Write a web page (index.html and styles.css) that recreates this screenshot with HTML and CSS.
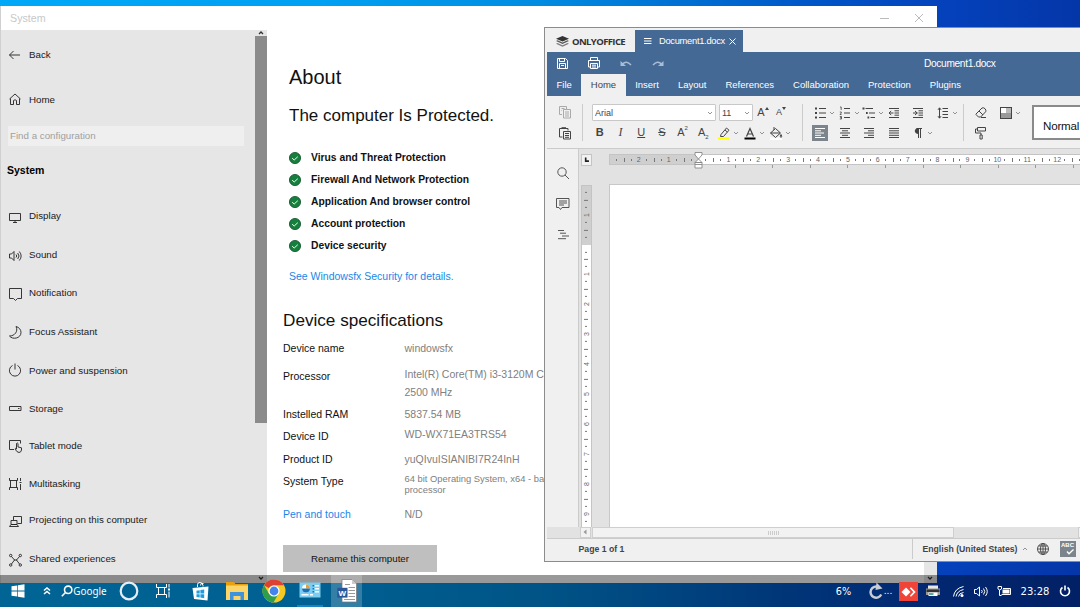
FILE: index.html
```html
<!DOCTYPE html>
<html lang="en">
<head>
    <meta charset="UTF-8">
    <meta name="viewport" content="width=device-width, initial-scale=1.0">
    <title>Desktop</title>
    <link rel="stylesheet" href="styles.css">
</head>
<body>
    <svg class="defs">
        <symbol id="chev" viewBox="0 0 8 8"><path d="M2 3l2 2 2-2"/></symbol>
    </svg>

    <!-- Settings window -->
    <div class="window settings">
        <div class="titlebar">
            <span>System</span>
            <svg width="56" height="12" viewBox="0 0 56 12"><path d="M6 6.500h9M41 2l8 8M49 2l-8 8"/></svg>
        </div>
        <div class="settings-body">
            <div class="sidebar">
                <div class="nav">
                    <a class="nav-item back"><svg viewBox="0 0 16 16"><path d="M2.500 8H13M6.500 4l-4 4 4 4"/></svg>Back</a>
                    <a class="nav-item home"><svg viewBox="0 0 16 16"><path d="M2.500 8l5.500-5 5.500 5M3.500 7.500v6h3V9.500q1.500-1.500 3 0v4h3v-6"/></svg>Home</a>
                    <input class="search" type="text" placeholder="Find a configuration">
                    <h3>System</h3>
                    <a class="nav-item"><svg class="low2" viewBox="0 0 16 16"><path d="M2.500 3.500h11v7h-11zM6 12.500h4M8 10.500v2"/></svg>Display</a>
                    <a class="nav-item"><svg class="low2" viewBox="0 0 16 16"><path d="M2.500 6h2l2.500-2.500v9L4.500 10h-2zM9 6.500q1.500 1.500 0 3M10.700 5q2.600 3 0 6M12.300 3.500q3.700 4.500 0 9"/></svg>Sound</a>
                    <a class="nav-item"><svg class="low1" viewBox="0 0 16 16"><path d="M2.500 2.500h12v10h-4l-2 2-2-2h-4z"/></svg>Notification</a>
                    <a class="nav-item"><svg class="low1" viewBox="0 0 16 16"><path d="M9 1.500c2.500 5-1.500 9.500-6.500 9.500 3 4 11.500 2.500 11.500-3.500 0-3-2-5.200-5-6z"/></svg>Focus Assistant</a>
                    <a class="nav-item"><svg viewBox="0 0 16 16"><path d="M5.500 3.500a5.600 5.600 0 1 0 5 0M8 1.500v6"/></svg>Power and suspension</a>
                    <a class="nav-item"><svg viewBox="0 0 16 16"><path d="M2.500 5.500h11.500v4H2.500zM11 7.500h1.500"/></svg>Storage</a>
                    <a class="nav-item tight"><svg class="low1" viewBox="0 0 16 16"><path d="M7 11.500H2.500v-9h11v3M9.500 11V5.500q1-1 1.500 0V9l3.500 .8V12q-.5 2.500-2.500 2.500-2 0-4-3.500 .5-1.500 1.500 0"/></svg>Tablet mode</a>
                    <a class="nav-item"><svg viewBox="0 0 16 16"><path d="M3.500 4.500v7M9.500 4.500v7M2.500 2v2.500h8V2M2.500 14v-2.500h8V14M13.500 2v3M13.500 8v6M12.500 6.500h2"/></svg>Multitasking</a>
                    <a class="nav-item tight"><svg class="low2" viewBox="0 0 16 16"><path d="M6.500 6V2.500h8v7h-4M4 6.500h6v4H4zM2.500 12.500h9l-1.500-2H4z"/></svg>Projecting on this computer</a>
                    <a class="nav-item"><svg class="low1" viewBox="0 0 16 16"><path d="M4.500 4.500l3 3.500M12.500 4.500L9.500 8M4.500 12l3-4M12.500 12l-3-4M7 8h3"/><circle cx="3.700" cy="3.500" r="1.200"/><circle cx="13.300" cy="3.500" r="1.200"/><circle cx="3.700" cy="13" r="1.200"/><circle cx="13.300" cy="13" r="1.200"/></svg>Shared experiences</a>
                </div>
                <div class="scrollbar">
                    <svg viewBox="0 0 12 6"><path d="M4 4l2-2 2 2"/></svg>
                    <div class="thumb"></div>
                    <svg class="down" viewBox="0 0 12 6"><path d="M4 1l2 2 2-2"/></svg>
                </div>
            </div>
            <div class="content">
                <h1>About</h1>
                <h2>The computer Is Protected.</h2>
                <ul class="checks">
                    <li><svg viewBox="0 0 12 12"><circle cx="6" cy="6" r="5.600"/><path d="M3.200 6.200l2 1.800 3.600-3.300"/></svg>Virus and Threat Protection</li>
                    <li><svg viewBox="0 0 12 12"><circle cx="6" cy="6" r="5.600"/><path d="M3.200 6.200l2 1.800 3.600-3.300"/></svg>Firewall And Network Protection</li>
                    <li><svg viewBox="0 0 12 12"><circle cx="6" cy="6" r="5.600"/><path d="M3.200 6.200l2 1.800 3.600-3.300"/></svg>Application And browser control</li>
                    <li><svg viewBox="0 0 12 12"><circle cx="6" cy="6" r="5.600"/><path d="M3.200 6.200l2 1.800 3.600-3.300"/></svg>Account protection</li>
                    <li><svg viewBox="0 0 12 12"><circle cx="6" cy="6" r="5.600"/><path d="M3.200 6.200l2 1.800 3.600-3.300"/></svg>Device security</li>
                </ul>
                <a class="link details">See Windowsfx Security for details.</a>
                <div class="specs-block">
                    <h2>Device specifications</h2>
                    <dl class="specs">
                        <dt>Device name</dt><dd>windowsfx</dd>
                        <dt class="cpu">Processor</dt><dd class="cpu">Intel(R) Core(TM) i3-3120M CPU<br>2500 MHz</dd>
                        <dt>Instelled RAM</dt><dd>5837.54 MB</dd>
                        <dt>Device ID</dt><dd class="raised">WD-WX71EA3TRS54</dd>
                        <dt>Product ID</dt><dd>yuQIvuISIANIBI7R24InH</dd>
                        <dt>System Type</dt><dd class="small">64 bit Operating System, x64 - based<br>processor</dd>
                        <dt><a class="link">Pen and touch</a></dt><dd>N/D</dd>
                    </dl>
                    <button type="button">Rename this computer</button>
                </div>
            </div>
            <div class="page-scroll"><svg viewBox="0 0 12 6"><path d="M4 1l2 2 2-2"/></svg></div>
        </div>
    </div>

    <div class="taskbar-shade"></div>

    <!-- Editor window -->
    <div class="window editor">
        <div class="app-tabs">
            <div class="brand">
                <svg width="13" height="11" viewBox="0 0 13 11"><path d="M6.500 0L13 2.700 6.500 5.600 0 2.700z"/><path opacity=".8" d="M1.500 4.300L0 5l6.500 3L13 5l-1.500-.7-5 2.300z"/><path opacity=".6" d="M1.500 7L0 7.700l6.500 3L13 7.700 11.500 7l-5 2.300z"/></svg>
                ONLYOFFICE
            </div>
            <div class="doc-tab">
                <svg width="8" height="8" viewBox="0 0 8 8"><path d="M0 1.500h7.500M0 4h7.500M0 6.500h7.500"/></svg>
                <span>Document1.docx</span>
                <svg width="7" height="7" viewBox="0 0 7 7"><path d="M.5.5l6 6M6.500.5l-6 6"/></svg>
            </div>
        </div>
        <div class="quickbar">
            <svg viewBox="0 0 14 14"><path d="M2.500 2.500h8l2 2v8h-10zM4.500 2.500v3h5v-3M4.500 12.500v-5h6v5M6 9.500h3"/></svg>
            <svg viewBox="0 0 14 14"><path d="M3.500 4.500v-3h7v3M3 11H1.500V4.500h11V11H11M3.500 7.500h7v5h-7zM5 9.200h4M5 11h4"/></svg>
            <svg class="arrow" viewBox="0 0 14 14"><path class="head" d="M1.500 5v5H7z"/><path d="M3.500 8q4-4 8.500 1"/></svg>
            <svg class="arrow" viewBox="0 0 14 14"><path class="head" d="M12.500 5v5H7z"/><path d="M10.500 8q-4-4-8.500 1"/></svg>
            <div class="doc-name">Document1.docx</div>
        </div>
        <div class="ribbon-tabs">
            <span>File</span><span class="active">Home</span><span>Insert</span><span>Layout</span><span>References</span><span>Collaboration</span><span>Protection</span><span>Plugins</span>
        </div>
        <div class="toolbar">
            <div class="group clipboard">
                <svg class="dim" viewBox="0 0 16 16"><path d="M5 10.500H2.500v-8h7V5M4.500 4.500h3M4.500 6.500H5M6.500 5.500h7V14h-7zM8 8h4M8 10h4M8 12h4"/></svg>
                <svg viewBox="0 0 16 16"><path d="M5.500 12h-3V3.500h8.500v2M6.500 6.500h7v7.500h-7zM8 8.500h4M8 10.500h4M8 12.300h4"/><path class="thick" d="M4.500 3h4.500"/></svg>
            </div>
            <div class="group font">
                <div class="row">
                    <div class="combo family">Arial<svg class="chev"><use href="#chev"/></svg></div>
                    <div class="combo size">11<svg class="chev"><use href="#chev"/></svg></div>
                    <span class="glyph grow">A<svg viewBox="0 0 4 4"><path d="M2 0l2 3H0z"/></svg></span>
                    <span class="glyph shrink">A<svg viewBox="0 0 4 4"><path d="M2 3l2-3H0z"/></svg></span>
                </div>
                <div class="row">
                    <span class="glyph"><b>B</b></span>
                    <span class="glyph"><i>I</i></span>
                    <span class="glyph"><u>U</u></span>
                    <span class="glyph"><s>S</s></span>
                    <span class="glyph">A<sup>2</sup></span>
                    <span class="glyph">A<sub>2</sub></span>
                    <span class="tool wide"><svg viewBox="0 0 16 16"><path d="M5 9.500L10.500 3l2.500 2.200-5.500 6.300H4.500zM9 5l2.300 2"/><rect class="yellow" x="2" y="12.500" width="11" height="2"/></svg><svg class="chev"><use href="#chev"/></svg></span>
                    <span class="tool wide"><svg viewBox="0 0 16 16"><path class="thin-a" d="M4.500 11.500L8 3.500l3.500 8M5.500 9h5"/><rect class="black" x="2.500" y="12.500" width="11" height="2"/></svg><svg class="chev"><use href="#chev"/></svg></span>
                    <span class="tool wide"><svg viewBox="0 0 16 16"><rect class="white" x="2" y="12.500" width="12" height="2.500"/><path d="M2.500 8L7.500 3.500l5 4.500-5 4.500zM6 5V2M2.500 8h9.500M13 9.500q1.500 2 0 3-1.500-1 0-3z"/></svg><svg class="chev"><use href="#chev"/></svg></span>
                </div>
            </div>
            <div class="group para">
                <div class="row">
                    <span class="tool"><svg viewBox="0 0 16 16"><path d="M7 3.500h7M7 8h7M7 12.500h7"/><path class="dot" d="M3 3.500h2M3 8h2M3 12.500h2"/></svg><svg class="chev"><use href="#chev"/></svg></span>
                    <span class="tool"><svg viewBox="0 0 16 16"><path d="M7 3.500h6M7 8h6M7 12.500h6"/><path class="digits" d="M3 2h1.200v3M2.800 7h1.500v1L3 9.500h1.500M2.800 11.500h1.700V14H2.800M3 12.700h1.500"/></svg><svg class="chev"><use href="#chev"/></svg></span>
                    <span class="tool"><svg viewBox="0 0 16 16"><path d="M4.500 3.500H12M8 8h6M9.500 12.500H14"/><path class="dot" d="M1.500 3.500h2M5 8h1.700M6.500 12.500h1.700"/></svg><svg class="chev"><use href="#chev"/></svg></span>
                    <span class="tool"><svg viewBox="0 0 16 16"><path d="M3 3.500h10M8.500 5.800H13M8.500 8H13M8.500 10.200H13M3 12.500h10M3 8h4.500M5.200 6L3 8l2.200 2"/></svg></span>
                    <span class="tool"><svg viewBox="0 0 16 16"><path d="M3 3.500h10M8.500 5.800H13M8.500 8H13M8.500 10.200H13M3 12.500h10M3 8h4.500M5 6l2.200 2L5 10"/></svg></span>
                    <span class="tool"><svg viewBox="0 0 16 16"><path d="M7.500 3.500H13M7.500 6.500H13M7.500 9.500H13M7.500 12.500H13M4.500 3v10M3 4.800l1.500-2L6 4.800M3 11.200l1.500 2 1.500-2"/></svg><svg class="chev"><use href="#chev"/></svg></span>
                </div>
                <div class="row">
                    <span class="tool"><svg class="pressed" viewBox="0 0 16 16"><path d="M3 3.500h10M3 5.800h6M3 8h9M3 10.300h6M3 12.500h10"/></svg></span>
                    <span class="tool"><svg viewBox="0 0 16 16"><path d="M3 3.500h10M5 5.800h6M3 8h10M5 10.300h6M3 12.500h10"/></svg></span>
                    <span class="tool"><svg viewBox="0 0 16 16"><path d="M3 3.500h10M7 5.800h6M3 8h10M7 10.300h6M3 12.500h10"/></svg></span>
                    <span class="tool"><svg viewBox="0 0 16 16"><path d="M3 3.500h10M3 5.800h10M3 8h10M3 10.300h10M3 12.500h10"/></svg></span>
                    <span class="tool"><svg viewBox="0 0 16 16"><path d="M8.500 13V3.500M10.500 13V3.500M6.500 3.500H12"/><path class="solid" d="M8.500 3C3.500 3 3.500 9 8.500 9z"/></svg><svg class="chev"><use href="#chev"/></svg></span>
                </div>
            </div>
            <div class="group misc">
                <div class="row">
                    <span class="tool"><svg viewBox="0 0 16 16"><path d="M3 9l6-6q1.500-.8 3 .7t.7 3l-5 5.300H5.500L3 9.500zM6 6l4 4M8 12.500h5"/></svg></span>
                    <span class="tool"><svg viewBox="0 0 16 16"><rect class="white" x="2.500" y="2.500" width="11" height="11"/><path class="shade1" d="M8 3h5v5H8z"/><path class="shade2" d="M3 8h5v5H3zM8 8h5v5H8z"/><rect x="2.500" y="2.500" width="11" height="11"/></svg><svg class="chev"><use href="#chev"/></svg></span>
                </div>
                <div class="row">
                    <span class="tool"><svg viewBox="0 0 16 16"><path d="M4.500 2.500h8V6h-8zM4.500 4h-2v4H8v2M7 10h2.200v4H7z"/></svg></span>
                </div>
            </div>
            <div class="style-box">Normal</div>
        </div>
        <div class="workspace">
            <div class="left-menu">
                <svg viewBox="0 0 16 16"><circle cx="7" cy="7" r="4.200"/><path d="M10 10l4 4"/></svg>
                <svg viewBox="0 0 16 16"><path d="M1.500 2.500h12.500v9H7l-1.500 2-1.500-2H1.500zM4 5h8M4 7h8M4 9h5"/></svg>
                <svg viewBox="0 0 16 16"><path d="M3 3.500h6M5 6.200h6M7 9h7M3 11.700h8"/></svg>
            </div>
            <div class="vruler-col">
                <div class="corner"><svg viewBox="0 0 11 11"><path d="M4.500 3v4.500h4"/></svg></div>
                <div class="vruler">
                    <div class="off"><span class="half"></span><span>1</span><span class="half ticked"></span></div>
                    <div class="on"><span class="half"></span><span>1</span><span>2</span><span>3</span><span>4</span><span>5</span><span>6</span><span>7</span><span>8</span><span>9</span></div>
                </div>
            </div>
            <div class="canvas">
                <div class="hruler">
                    <div class="off"><span class="half"></span><span>2</span><span>1</span><span class="half ticked"></span></div>
                    <div class="on"><span class="half"></span><span>1</span><span>2</span><span>3</span><span>4</span><span>5</span><span>6</span><span>7</span><span>8</span><span>9</span><span>10</span><span>11</span><span>12</span><span class="half ticked"></span></div>
                    <svg class="indent" viewBox="0 0 9 17"><path d="M1 .5h7v2.500L4.500 7 1 3zM1 10.500L4.500 7 8 10.500zM1 10.500h7v5.500H1zM1 12.500h7"/></svg>
                </div>
                <div class="tab-stops"></div>
                <div class="page"></div>
            </div>
        </div>
        <div class="hscroll">
            <div class="arrow-left"><svg viewBox="0 0 8 8"><path d="M5.500 1.500v5L2.500 4z"/></svg></div>
            <div class="hthumb"><i></i></div>
            <div class="arrow-right"></div>
        </div>
        <div class="statusbar">
            <span class="pages">Page 1 of 1</span>
            <div class="lang">
                <span>English (United States)</span>
                <svg class="chev up"><use href="#chev"/></svg>
                <svg class="globe" viewBox="0 0 14 14"><circle cx="7" cy="7" r="5.500"/><ellipse cx="7" cy="7" rx="2.500" ry="5.500"/><path d="M1.500 7h11M2.500 4h9M2.500 10h9M7 1.500v11"/></svg>
                <div class="spell">ABC<svg viewBox="0 0 8 6"><path d="M1 2.500l2 2.300L7.500.5"/></svg></div>
            </div>
        </div>
    </div>

    <!-- Taskbar -->
    <div class="taskbar">
        <div class="launchers">
            <div class="slot start"><svg width="14" height="14" viewBox="0 0 14 14"><path fill="#fff" d="M.5 2.300l5.800-.9v5.200H.5zM7 1.300L13.500.3v6.300H7zM.5 7.400h5.800v5.200l-5.800-.9zM7 7.400h6.500v6.300L7 12.700z"/></svg></div>
            <div class="slot chevrons"><svg width="8" height="8" viewBox="0 0 8 8"><path class="line" d="M1 3.500l3-2.500 3 2.500M1 7l3-2.500L7 7"/></svg></div>
            <div class="slot google"><svg width="12" height="12" viewBox="0 0 12 12"><circle class="line" cx="7.200" cy="4.800" r="3.700"/><path class="line" d="M4.500 7.500L.8 11.200"/></svg>Google</div>
            <div class="slot cortana"><svg width="20" height="20" viewBox="0 0 20 20"><circle class="ring" cx="10" cy="10" r="8.300"/></svg></div>
            <div class="slot tasks"><svg width="16" height="16" viewBox="0 0 16 16"><path class="line thin" d="M3.500 4.500v7M9.500 4.500v7M1.500 1v3.500h10V1M1.500 15v-3.500h10V15M14 1v3.500M14 8.500v6"/><path fill="#fff" d="M13 5.500h2v2h-2z"/></svg></div>
            <div class="slot store"><svg width="20" height="20" viewBox="0 0 20 20"><path class="line thin" d="M6.500 6V3.500q0-2 2.500-2t3 3v1M9.500 4.500q0-3 3-2"/><path fill="#fff" d="M1.500 7l16-1.500-1 14L3 18z"/><path fill="#1b9de0" d="M5.500 9.700l3.200-.5v3.300H5.500zM9.400 9.100l3.800-.5v3.900H9.400zM5.500 13.300h3.200v3.200l-3.200-.5zM9.400 13.300h3.800v3.900l-3.800-.6z"/></svg></div>
            <div class="slot files"><svg width="24" height="20" viewBox="0 0 24 20"><path fill="#e8a00c" d="M1 1h8l1.500 2H23v5H1z"/><path fill="#fbd46a" d="M1 4.500h22V19H1z"/><path fill="#3f92dc" d="M5 11h14v8h-3.500v-4h-7v4H5z"/></svg></div>
            <div class="slot browser"><svg width="24" height="24" viewBox="0 0 24 24"><circle cx="12" cy="12" r="11.500" fill="#f5c822"/><path fill="#dd4034" d="M2 6.200A11.500 11.500 0 0 1 22 6.300H12a5.700 5.700 0 0 0-5 3z"/><path fill="#2f9e4c" d="M2 6.200a11.500 11.500 0 0 0 9.500 17.300l5-8.700-9.500 0z"/><circle cx="12" cy="12" r="5.600" fill="#fff"/><circle cx="12" cy="12" r="4.400" fill="#4484ee"/></svg></div>
            <div class="slot running"><svg width="22" height="16" viewBox="0 0 22 16"><rect x=".5" y=".5" width="21" height="15" fill="#7bcdf2"/><circle cx="7" cy="6.500" r="4" fill="#fff"/><path fill="#e8a030" d="M7 6.500V2.500a4 4 0 0 1 4 4z"/><path fill="#1673b9" d="M7 6.500h4a4 4 0 0 1-8 0zM13.500 3h1.500v1.500h-1.500zM13.500 6h1.500v1.500h-1.500zM13.500 9h1.500v1.500h-1.500z"/><path fill="#fff" d="M16 3h4v1.500h-4zM16 6h4v1.500h-4zM16 9h4v1.500h-4zM2.500 12h7v1.500h-7zM11 12h3v1.500h-3z"/></svg></div>
            <div class="slot word"><svg width="20" height="24" viewBox="0 0 20 24"><path fill="#fff" stroke="#777" stroke-width=".7" d="M5 .5h10L19.500 5v18H5z"/><path fill="#ccc" d="M15 .5V5h4.500z"/><path stroke="#999" d="M8 5.500h5M11.500 8.500H18M11.500 11.500H18M11.500 14.500H18M11.500 17.500H18M7 20.500h11"/><path fill="#2a5699" d="M.3 8.800h10.200v9.800H.3z"/><text x="5.400" y="16.700">W</text></svg></div>
        </div>
        <div class="tray">
            <div class="slot load">6%</div>
            <div class="slot update"><svg width="16" height="18" viewBox="0 0 16 18"><path class="spin" d="M13.200 12.500A5.600 5.600 0 1 1 10.500 5"/><path fill="#c9cdd4" d="M8.500 .5l6 6-7 1.500z"/></svg><span>...</span></div>
            <div class="slot remote"><svg width="15" height="10" viewBox="0 0 15 10"><path fill="#fff" d="M5 .5L9.500 5 5 9.500.5 5z"/><path fill="#fff" d="M8.800 1.300L10 .2 14.700 5 10 9.800 8.800 8.700 12.300 5z"/></svg></div>
            <div class="slot printer"><svg width="16" height="14" viewBox="0 0 16 14"><path fill="#e8e8e8" d="M3 1.500h10V5H3z"/><path fill="#999" d="M1 4.500h14V11H1z"/><path fill="#333" d="M1.500 5.500h13v2.500h-13z"/><path fill="#fff" d="M3.500 8.500h9V12h-9z"/><path fill="#4bb2a5" d="M4 9h4.500v2H4z"/></svg></div>
            <div class="slot wifi"><svg width="13" height="13" viewBox="0 0 13 13"><path class="line thin" d="M1.500 11.500Q2.500 3.500 11.500 1.500M4 11.500q1-5.500 7.500-7M6.500 11.500q.5-3.500 5-4"/><circle cx="10" cy="10.500" r="1.500" fill="#fff"/></svg></div>
            <div class="slot volume"><svg width="15" height="13" viewBox="0 0 15 13"><path class="line thin" d="M1.500 4.500h2L6.500 2v9L3.500 8.500h-2zM8.500 5q1.500 1.500 0 3M10.500 3.500q2.500 3 0 6M12.500 2q3.500 4.500 0 9"/></svg></div>
            <div class="slot battery"><svg width="15" height="12" viewBox="0 0 15 12"><path class="line thin" d="M6 3.500h7.500v6H4.500M2.500 5v5.500h2M1 1.500h3.500V4q-1.700 2-3.500 0z"/><path fill="#fff" d="M5.500 4.500h7v4h-7z"/></svg></div>
            <div class="slot clock">23:28</div>
            <div class="slot power"><svg width="12" height="12" viewBox="0 0 12 12"><path class="line" d="M3.500 2.500a4.500 4.500 0 1 0 5 0M6 .5v5"/></svg></div>
        </div>
    </div>
</body>
</html>
```
FILE: styles.css
```css
* {
    box-sizing: border-box;
}
body {
    margin: 0;
    width: 1080px;
    height: 607px;
    position: relative;
    overflow: hidden;
    font-family: "Liberation Sans", Arial, sans-serif;
    background: linear-gradient(90deg, #00a8f8 0%, #00a0f2 30%, #008ce0 50%, #0058c8 74%, #0442bc 87%, #0436a8 100%);
}
h1, h2, h3, ul, dl, dd {
    margin: 0;
    padding: 0;
    font-weight: normal;
}
svg {
    display: block;
    flex: none;
    fill: none;
    stroke-width: 1;
}
.defs {
    position: absolute;
    width: 0;
    height: 0;
}
.window {
    position: absolute;
    display: flex;
    flex-direction: column;
    overflow: hidden;
}

/* Settings */
.settings {
    left: 0;
    top: 6px;
    width: 937px;
    height: 577px;
    background: #fff;
    border-left: 1px solid #d0d0d0;
}
.titlebar {
    height: 24px;
    display: flex;
    align-items: center;
    justify-content: space-between;
    padding: 0 7px 0 9px;
    font-size: 10.7px;
    color: #c8c8c8;
}
.titlebar svg {
    stroke: #aaa;
    stroke-width: .8;
}
.settings-body {
    flex: 1;
    display: flex;
    min-height: 0;
}
.sidebar {
    width: 266px;
    display: flex;
    background: #e6e6e6;
}
.nav {
    flex: 1;
    margin-top: -.3px;
}
.nav-item {
    display: flex;
    align-items: center;
    gap: 6px;
    height: 38.6px;
    padding-left: 6px;
    font-size: 9.75px;
    color: #1a1a1a;
}
.nav-item svg {
    width: 16px;
    height: 16px;
    stroke: #222;
    stroke-width: .9;
}
.nav-item .low1 {
    margin-top: 2px;
}
.nav-item .low2 {
    margin-top: 4px;
}
.nav-item.tight {
    margin-top: -2.3px;
}
.nav-item.back {
    height: 50px;
}
.nav-item.home {
    height: 39px;
}
.search {
    display: block;
    width: 236px;
    height: 20px;
    margin: 7px 0 0 7px;
    padding: 0 2px;
    border: none;
    background: #efefef;
    font: 9.75px "Liberation Sans", Arial, sans-serif;
}
.search::placeholder {
    color: #a0a0a0;
}
.nav h3 {
    margin: 14px 0 16.8px 6px;
    font-size: 10.5px;
    line-height: 20px;
    font-weight: bold;
    color: #000;
}
.scrollbar {
    width: 12px;
    display: flex;
    flex-direction: column;
}
.scrollbar svg,
.page-scroll svg {
    width: 12px;
    height: 6px;
    stroke: #333;
    stroke-width: 1.3;
}
.thumb {
    height: 387px;
    background: #8b8b8b;
}
.scrollbar .down {
    margin-top: auto;
    margin-bottom: 1px;
}
.content {
    flex: 1;
    padding: 35px 0 0 22px;
    color: #111;
    white-space: nowrap;
}
h1 {
    font-size: 20px;
    line-height: 24px;
}
h2 {
    font-size: 17px;
    line-height: 22px;
    margin-top: 16.2px;
}
.checks {
    list-style: none;
    margin-top: 19.3px;
}
.checks li {
    display: flex;
    align-items: center;
    gap: 10px;
    height: 22.1px;
    font-size: 10.3px;
    font-weight: bold;
}
.checks svg {
    width: 12px;
    height: 12px;
}
.checks circle {
    fill: #15803d;
    stroke: #0c4f27;
    stroke-width: .8;
}
.checks path {
    stroke: #e8fff0;
}
.link {
    color: #1a86e8;
}
.details {
    display: block;
    margin-top: 11px;
    font-size: 10.5px;
    line-height: 16px;
}
.specs-block {
    margin-left: -6px;
}
.specs-block h2 {
    margin-top: 25.5px;
    font-size: 17.15px;
}
.specs {
    display: grid;
    grid-template-columns: 121.5px 1fr;
    grid-template-rows: 22px 44px 22px 22.5px 22px 33.5px 22px;
    margin-top: 6px;
    font-size: 10.5px;
    line-height: 22px;
}
.specs dd {
    color: #808080;
}
.specs dt.cpu {
    padding-top: 6px;
}
.specs dd.cpu {
    padding-top: 6px;
    line-height: 18px;
}
.specs .raised {
    line-height: 19.5px;
}
.specs .small {
    padding-top: 3px;
    font-size: 9.4px;
    line-height: 11px;
}
.specs-block button {
    display: block;
    width: 154px;
    height: 27px;
    margin-top: 19.5px;
    border: none;
    background: #bfbfbf;
    font: 9.75px "Liberation Sans", Arial, sans-serif;
    color: #111;
}
.page-scroll {
    width: 13px;
    display: flex;
    align-items: flex-end;
    padding-bottom: 1px;
    background: linear-gradient(#fff 94%, #e6e6e6 94%);
}

/* Editor */
.editor {
    left: 544px;
    top: 27px;
    width: 560px;
    height: 535px;
    padding-left: 2px;
    border: 1px solid #8c8c8c;
    background: #f0f0f0;
}
.app-tabs {
    display: flex;
    align-items: flex-end;
    height: 24px;
}
.brand {
    display: flex;
    align-items: center;
    gap: 3px;
    width: 88px;
    height: 22px;
    padding-left: 9px;
    font: bold 9.5px "Open Sans", sans-serif;
    letter-spacing: -.6px;
    color: #333;
}
.brand svg {
    fill: #333;
}
.doc-tab {
    display: flex;
    align-items: center;
    width: 108px;
    height: 22px;
    padding-left: 9px;
    background: #446995;
    color: #fff;
    font-size: 9.35px;
    letter-spacing: -.3px;
}
.doc-tab span {
    margin: 0 4px 0 7px;
}
.doc-tab svg,
.quickbar svg {
    stroke: #fff;
}
.quickbar {
    display: flex;
    align-items: center;
    gap: 18px;
    height: 22px;
    padding-left: 8px;
    background: #446995;
}
.quickbar svg {
    width: 14px;
    height: 14px;
}
.quickbar .arrow {
    stroke: #a9bdd5;
    stroke-width: 1.5;
}
.quickbar .head {
    fill: #a9bdd5;
    stroke: none;
}
.doc-name {
    margin-left: 241px;
    color: #fff;
    font-size: 10.2px;
    letter-spacing: -.35px;
}
.ribbon-tabs {
    display: flex;
    height: 22px;
    background: #446995;
    color: #fff;
    font-size: 9.5px;
    line-height: 22px;
}
.ribbon-tabs span {
    padding: 0 9.5px;
}
.ribbon-tabs .active {
    background: #f0f0f0;
    color: #444;
}
.toolbar {
    display: flex;
    height: 53px;
    padding-top: 8px;
    border-bottom: 1px solid #cbcbcb;
}
.group {
    flex: none;
    height: 37px;
    display: flex;
    flex-direction: column;
    justify-content: space-between;
}
.group svg {
    width: 16px;
    height: 16px;
    stroke: #444;
}
.group + .group {
    border-left: 1px solid #cbcbcb;
}
.clipboard {
    width: 35px;
    padding-left: 10px;
}
.group .dim {
    stroke: #aaa;
}
.group .thick {
    stroke-width: 1.6;
}
.group .thin-a {
    stroke-width: 1.2;
}
.group .digits {
    stroke-width: .8;
}
.group .dot {
    stroke-width: 2;
}
.group .solid {
    fill: #444;
    stroke: none;
}
.group .yellow {
    fill: #ff0;
    stroke: none;
}
.group .black {
    fill: #000;
    stroke: none;
}
.group .white {
    fill: #fff;
    stroke: none;
}
.group .shade1 {
    fill: #bbb;
    stroke: none;
}
.group .shade2 {
    fill: #999;
    stroke: none;
}
.group svg.chev,
.chev {
    width: 8px;
    height: 8px;
    stroke: #888;
    stroke-width: .9;
}
.row {
    display: flex;
    align-items: center;
    height: 17px;
}
.font {
    width: 220px;
    padding-left: 6.5px;
}
.font .row:first-child {
    padding-left: 2.5px;
}
.combo {
    display: flex;
    align-items: center;
    justify-content: space-between;
    height: 17px;
    padding: 0 1px 0 2px;
    border: 1px solid #c8c8c8;
    border-radius: 1px;
    background: #fff;
    font-size: 9px;
    color: #444;
}
.family {
    width: 124px;
}
.size {
    width: 34px;
    margin: 0 1px 0 3px;
}
.glyph {
    display: flex;
    align-items: center;
    justify-content: center;
    width: 20.7px;
    font-size: 11px;
    line-height: 17px;
    color: #444;
}
.glyph i {
    font-family: "Liberation Serif", serif;
    font-size: 12px;
}
.glyph sup,
.glyph sub {
    font-size: 6px;
    line-height: 8px;
}
.glyph sup {
    align-self: flex-start;
}
.glyph sub {
    align-self: flex-end;
}
.grow,
.shrink {
    width: 18px;
}
.shrink {
    font-size: 9px;
}
.group .glyph svg {
    width: 4px;
    height: 4px;
    margin-top: -7px;
    fill: #444;
    stroke: none;
}
.tool {
    display: flex;
    align-items: center;
    width: 24.5px;
}
.tool.wide {
    width: 26px;
}
.glyph + .tool {
    margin-left: 2px;
}
.para {
    width: 161px;
    padding-left: 9px;
}
.misc {
    width: 69px;
    padding-left: 9px;
}
.group .pressed {
    background: #7d858c;
    stroke: #fff;
}
.style-box {
    flex: none;
    width: 120px;
    height: 35px;
    margin-top: 1px;
    padding-left: 9px;
    border: 2px solid #8a8a8a;
    background: #fff;
    font-size: 11.6px;
    letter-spacing: -.2px;
    line-height: 37px;
    color: #111;
}
.workspace {
    display: flex;
    height: 378px;
    background: #e2e2e2;
}
.left-menu {
    display: flex;
    flex-direction: column;
    gap: 15px;
    width: 32px;
    padding: 16px 0 0 8px;
    background: #f0f0f0;
    border-right: 1px solid #cbcbcb;
}
.left-menu svg {
    width: 16px;
    height: 16px;
    stroke: #555;
}
.vruler-col {
    width: 13px;
    padding: 5px 0 0 2px;
}
.corner {
    width: 11px;
    height: 12px;
    margin-bottom: 19px;
    border: 1px solid #c4c4c4;
    background: #f2f2f2;
}
.corner svg {
    stroke: #222;
    stroke-width: 2;
}
.vruler {
    width: 11px;
    height: 342px;
    overflow: hidden;
    border: solid #c4c4c4;
    border-width: 1px 1px 0;
}
.vruler > div,
.hruler > div {
    display: flex;
    font-size: 7px;
    color: #666;
}
.vruler > div {
    flex-direction: column;
}
.vruler .off {
    height: 58.5px;
    justify-content: flex-end;
    background: #cfcfcf;
}
.vruler .on {
    background: #fff;
}
.vruler span {
    flex: none;
    display: flex;
    align-items: center;
    justify-content: center;
    width: 9px;
    height: 29.9px;
    writing-mode: vertical-rl;
    transform: rotate(180deg);
    background:
        linear-gradient(#777, #777) 50% 24% / 2px 1px,
        linear-gradient(#777, #777) 50% 76% / 2px 1px,
        linear-gradient(#777, #777) 50% 100% / 4px 1px;
    background-repeat: no-repeat;
}
.vruler .half {
    height: 14.9px;
    background: linear-gradient(#777, #777) 50% 50% / 2px 1px no-repeat;
}
.vruler .ticked {
    background:
        linear-gradient(#777, #777) 50% 50% / 2px 1px,
        linear-gradient(#777, #777) 50% 100% / 4px 1px;
    background-repeat: no-repeat;
}
.canvas {
    flex: 1;
    min-width: 0;
    padding: 5px 0 0 17px;
}
.hruler {
    position: relative;
    display: flex;
    height: 11px;
    border: solid #c4c4c4;
    border-width: 1px 0 1px 1px;
}
.hruler > div {
    height: 9px;
    flex: none;
}
.hruler .off {
    width: 88.5px;
    justify-content: flex-end;
    background: #cfcfcf;
}
.hruler .on {
    width: 390px;
    background: #fff;
}
.hruler span {
    flex: none;
    width: 29.9px;
    text-align: center;
    line-height: 9px;
    background:
        linear-gradient(#777, #777) 24% 50% / 1px 2px,
        linear-gradient(#777, #777) 76% 50% / 1px 2px,
        linear-gradient(#777, #777) 0 50% / 1px 4px;
    background-repeat: no-repeat;
}
.hruler .half {
    width: 14.9px;
    background: linear-gradient(#777, #777) 50% 50% / 1px 2px no-repeat;
}
.hruler .ticked {
    background:
        linear-gradient(#777, #777) 50% 50% / 1px 2px,
        linear-gradient(#777, #777) 0 50% / 1px 4px;
    background-repeat: no-repeat;
}
.hruler .indent {
    position: absolute;
    left: 84px;
    top: -3px;
    width: 9px;
    height: 17px;
    fill: #fff;
    stroke: #888;
    stroke-width: .9;
}
.tab-stops {
    height: 3px;
    margin-left: 89px;
    background: repeating-linear-gradient(90deg, transparent 0 36.6px, #999 36.6px 37.6px);
}
.page {
    height: 343px;
    margin-top: 16px;
    border: solid #c8c8c8;
    border-width: 1px 0 0 1px;
    background: #fff;
}
.hscroll {
    display: flex;
    height: 11px;
    padding-left: 33px;
    background: #e2e2e2;
}
.hscroll > div {
    flex: none;
    border: 1px solid #cfcfcf;
    background: #f2f2f2;
}
.arrow-left {
    width: 11px;
}
.arrow-left svg {
    width: 8px;
    height: 8px;
    fill: #999;
}
.hscroll .hthumb {
    display: flex;
    align-items: center;
    justify-content: center;
    width: 362px;
    margin: 0 124px 0 1px;
}
.hthumb i {
    width: 11px;
    height: 4px;
    background: repeating-linear-gradient(90deg, #ccc 0 1px, transparent 1px 2px);
}
.arrow-right {
    width: 11px;
}
.statusbar {
    flex: 1;
    display: flex;
    align-items: center;
    justify-content: space-between;
    padding: 0 27.5px 2px 31.5px;
    border-top: 1px solid #cbcbcb;
    font-size: 8.7px;
    font-weight: bold;
    color: #444;
}
.lang {
    display: flex;
    align-items: center;
    height: 20px;
    padding-left: 9px;
    border-left: 1px solid #cbcbcb;
}
.up {
    margin-left: 3px;
    transform: rotate(180deg);
}
.globe {
    width: 14px;
    height: 14px;
    margin: 0 10px 0 7px;
    stroke: #444;
    stroke-width: .9;
}
.spell {
    width: 16px;
    height: 16px;
    background: #7d858c;
    color: #fff;
    font-size: 6px;
    line-height: 8px;
    text-align: center;
}
.spell svg {
    width: 8px;
    height: 6px;
    margin-left: 6px;
    stroke: #fff;
    stroke-width: 1.3;
}

/* Taskbar */
.taskbar,
.taskbar-shade {
    position: absolute;
    left: 0;
    top: 575px;
    width: 1080px;
    height: 32px;
}
.taskbar-shade {
    background: rgba(0, 0, 0, .4);
}
.taskbar {
    display: flex;
    justify-content: space-between;
    color: #fff;
}
.launchers,
.tray {
    display: flex;
}
.tray {
    padding-right: 4px;
}
.slot {
    display: flex;
    align-items: center;
    justify-content: center;
    height: 32px;
}
.slot .line {
    stroke: #fff;
    stroke-width: 1.6;
}
.slot .thin {
    stroke-width: 1;
}
.ring {
    stroke: #e6eef5;
    stroke-width: 2.2;
}
.start {
    width: 35px;
}
.chevrons {
    width: 23px;
}
.google {
    width: 52px;
    font: 9.9px "Noto Sans", sans-serif;
}
.cortana {
    width: 37px;
}
.tasks {
    width: 32px;
}
.store {
    width: 44px;
}
.files {
    width: 28px;
}
.browser {
    width: 46px;
}
.running {
    width: 26px;
    border-bottom: 2px solid #1583c4;
}
.word {
    width: 31px;
    margin-left: 8px;
    background: rgba(255, 255, 255, .2);
}
.word text {
    fill: #fff;
    font: bold 8px "Liberation Sans", Arial, sans-serif;
    text-anchor: middle;
}
.load {
    width: 35px;
    font: 9.7px "DejaVu Sans", sans-serif;
}
.update {
    width: 38px;
}
.update span {
    font: 9px "DejaVu Sans", sans-serif;
}
.spin {
    stroke: #c9cdd4;
    stroke-width: 2.4;
}
.remote {
    width: 19px;
    height: 19px;
    margin-top: 7px;
    background: #f04438;
}
.printer {
    width: 30px;
}
.wifi {
    width: 20px;
}
.volume {
    width: 24px;
}
.battery {
    width: 24px;
}
.clock {
    width: 38px;
    font: 10px "DejaVu Sans", sans-serif;
}
.power {
    width: 22px;
}
```
